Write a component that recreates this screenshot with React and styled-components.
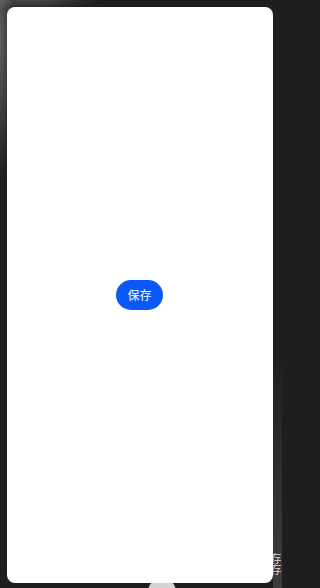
import React from "react";
import styled, { createGlobalStyle } from "styled-components";

const Global = createGlobalStyle`
  html, body { margin: 0; padding: 0; background: #1e1e1e; }
  body { font-family: "Noto Sans CJK SC", "Noto Sans", sans-serif; }
`;

const Frame = styled.div`
  position: relative;
  width: 282px;
  height: 588px;
  box-sizing: border-box;
  padding: 7px 9px 5px 7px;
  overflow: hidden;
  display: flex;
  background:
    radial-gradient(ellipse 14px 140px at 0px 40px, rgba(150,150,150,0.55), rgba(150,150,150,0) 100%),
    radial-gradient(ellipse 70px 10px at 30px 0px, rgba(120,120,120,0.5), rgba(120,120,120,0) 100%),
    linear-gradient(180deg, rgba(40,40,40,0) 60%, rgba(120,120,120,0.35) 100%) right / 9px 100% no-repeat,
    #1e1e1e;
`;

const Screen = styled.main`
  flex: 1;
  background: #ffffff;
  border-radius: 8px;
  display: flex;
  align-items: center;
  justify-content: center;
  position: relative;
  z-index: 1;
`;

const SaveButton = styled.button`
  width: 47px;
  height: 30px;
  margin-left: -1px;
  margin-top: 0px;
  border: none;
  border-radius: 15px;
  background: #0a59f7;
  color: #ffffff;
  font-family: "Noto Sans CJK SC", sans-serif;
  font-size: 12px;
  line-height: 30px;
  padding: 0;
  cursor: pointer;
`;

const HomeKnob = styled.div`
  position: absolute;
  left: 148px;
  top: 578px;
  width: 28px;
  height: 28px;
  border-radius: 50%;
  background: #d4d4d4;
  z-index: 0;
`;

const EdgeText = styled.div`
  position: absolute;
  left: 270px;
  top: 553px;
  writing-mode: vertical-rl;
  font-family: "Noto Sans CJK SC", sans-serif;
  font-size: 11px;
  line-height: 11px;
  color: #d8d8d8;
  z-index: 0;
`;

export default function App() {
  return (
    <>
      <Global />
      <Frame>
        <Screen>
          <SaveButton>保存</SaveButton>
        </Screen>
        <HomeKnob />
        <EdgeText>存存</EdgeText>
      </Frame>
    </>
  );
}
